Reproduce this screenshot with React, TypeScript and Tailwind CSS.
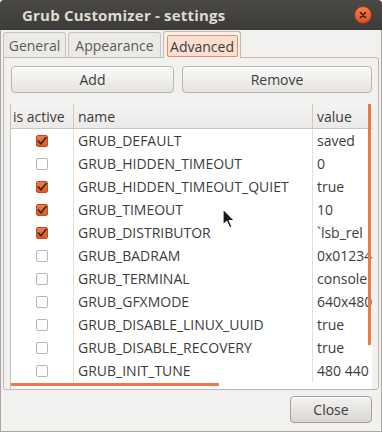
import React from "react";

const rows: { on: boolean; name: string; value: string }[] = [
  { on: true, name: "GRUB_DEFAULT", value: "saved" },
  { on: false, name: "GRUB_HIDDEN_TIMEOUT", value: "0" },
  { on: true, name: "GRUB_HIDDEN_TIMEOUT_QUIET", value: "true" },
  { on: true, name: "GRUB_TIMEOUT", value: "10" },
  { on: true, name: "GRUB_DISTRIBUTOR", value: "`lsb_rel" },
  { on: false, name: "GRUB_BADRAM", value: "0x01234" },
  { on: false, name: "GRUB_TERMINAL", value: "console" },
  { on: false, name: "GRUB_GFXMODE", value: "640x480" },
  { on: false, name: "GRUB_DISABLE_LINUX_UUID", value: "true" },
  { on: false, name: "GRUB_DISABLE_RECOVERY", value: "true" },
  { on: false, name: "GRUB_INIT_TUNE", value: "480 440" },
];

function Check({ on }: { on: boolean }) {
  if (on) {
    return (
      <div className="w-[12px] h-[12px] rounded-[2px] border border-[#c24a1c] bg-gradient-to-b from-[#f07a48] to-[#dd5a26] flex items-center justify-center">
        <svg width="10" height="10" viewBox="0 0 10 10">
          <path d="M1.5 5 L4 7.8 L8.8 1.8" fill="none" stroke="#3a2a24" strokeWidth="1.8" strokeLinecap="round" strokeLinejoin="round" />
        </svg>
      </div>
    );
  }
  return <div className="w-[12px] h-[12px] rounded-[2px] border border-[#b9b6b1] bg-white" />;
}

export default function App() {
  return (
    <div
      className="relative w-[382px] h-[432px] bg-[#f2f1f0] flex flex-col overflow-hidden text-[#3c3c3c]"
      style={{ fontFamily: '"Open Sans", "DejaVu Sans", sans-serif' }}
    >
      {/* title bar */}
      <div className="h-[30px] shrink-0 bg-gradient-to-b from-[#4a4945] to-[#3c3b37] flex items-center pl-[22px] pr-[10px] justify-between rounded-t-[4px]">
        <span className="text-[15px] font-bold text-[#dfdbd2] tracking-[0.2px]">Grub Customizer - settings</span>
        <div className="w-[18px] h-[18px] rounded-full bg-gradient-to-b from-[#f5804f] to-[#de4d15] border border-[#8a3a1a] flex items-center justify-center">
          <svg width="8" height="8" viewBox="0 0 8 8">
            <path d="M1.5 1.5 L6.5 6.5 M6.5 1.5 L1.5 6.5" stroke="#3a1a0c" strokeWidth="1.5" strokeLinecap="round" />
          </svg>
        </div>
      </div>

      <div className="flex-1 flex flex-col border-x border-b border-[#a8a6a2]">
        {/* tabs */}
        <div className="h-[27px] shrink-0 flex items-end pl-[2px] gap-[2px] relative z-10">
          <div className="w-[63px] h-[25px] border border-b-0 border-[#c7c4bf] rounded-t-[3px] bg-[#eceae7] flex items-center justify-center text-[14px] text-[#5a5a5a]">
            General
          </div>
          <div className="w-[93px] h-[25px] border border-b-0 border-[#c7c4bf] rounded-t-[3px] bg-[#eceae7] flex items-center justify-center text-[14px] text-[#5a5a5a]">
            Appearance
          </div>
          <div className="w-[78px] h-[27px] mb-[-1px] border border-b-0 border-[#bcb9b4] rounded-t-[3px] bg-[#f2f1f0] flex items-start justify-center pt-[3px]">
            <div className="w-[71px] h-[22px] border border-[#ec8a60] rounded-[2px] bg-[#fadfd2] flex items-center justify-center text-[14px] text-[#3c3c3c]">
              Advanced
            </div>
          </div>
        </div>

        {/* notebook panel */}
        <div className="mx-[2px] h-[333px] shrink-0 border border-[#bcb9b4] rounded-b-[3px] rounded-tr-[3px] flex flex-col px-[6px] pt-[8px]">
          <div className="flex gap-[8px] pl-[1px]">
            <button className="w-[163px] h-[27px] rounded-[4px] border border-[#b8b5b0] bg-gradient-to-b from-[#fafaf9] to-[#e6e4e1] text-[14px] text-[#3c3c3c] shadow-[inset_0_1px_0_#ffffff]">
              Add
            </button>
            <button className="w-[190px] h-[27px] rounded-[4px] border border-[#b8b5b0] bg-gradient-to-b from-[#fafaf9] to-[#e6e4e1] text-[14px] text-[#3c3c3c] shadow-[inset_0_1px_0_#ffffff]">
              Remove
            </button>
          </div>

          {/* tree view */}
          <div className="relative mt-[11px] flex-1 bg-white border-l border-[#c4c1bc] overflow-hidden">
            <div className="flex h-[25px] bg-gradient-to-b from-[#f4f3f2] to-[#eceae8] border-b border-[#c9c6c1] text-[14px]">
              <div className="w-[63px] shrink-0 border-r border-[#cfccc7] pl-[2px] flex items-center whitespace-nowrap">is active</div>
              <div className="w-[239px] shrink-0 border-r border-[#cfccc7] pl-[4px] flex items-center">name</div>
              <div className="flex-1 min-w-0 pl-[4px] flex items-center">value</div>
            </div>
            <div>
              {rows.map((r, i) => (
                <div key={i} className="flex h-[23px] text-[14px]">
                  <div className="w-[63px] shrink-0 border-r border-[#e2e0dc] flex items-center pl-[25px]">
                    <Check on={r.on} />
                  </div>
                  <div className="w-[239px] shrink-0 border-r border-[#e2e0dc] pl-[4px] flex items-center whitespace-nowrap">{r.name}</div>
                  <div className="flex-1 min-w-0 pl-[4px] flex items-center whitespace-nowrap overflow-hidden">{r.value}</div>
                </div>
              ))}
            </div>
            {/* overlay scrollbars */}
            <div className="absolute right-[1px] top-0 w-[3px] h-[241px] bg-[#f07844]" />
            <div className="absolute left-0 bottom-[3px] w-[208px] h-[3px] bg-[#f07844]" />
          </div>
        </div>

        {/* bottom */}
        <div className="flex-1 flex justify-end items-start pt-[6px] pr-[9px]">
          <button className="w-[82px] h-[27px] rounded-[4px] border border-[#a5a29d] bg-gradient-to-b from-[#f4f3f2] to-[#d9d7d3] text-[14px] text-[#3c3c3c] shadow-[inset_0_1px_0_#ffffff]">
            Close
          </button>
        </div>
      </div>

      {/* mouse cursor */}
      <svg className="absolute left-[222px] top-[208px]" width="14" height="22" viewBox="0 0 14 22">
        <path d="M1 1 L1 17 L4.8 13.4 L7.6 19.8 L10 18.8 L7.3 12.6 L12.5 12.6 Z" fill="#1a1a1a" stroke="#ffffff" strokeWidth="1.2" strokeLinejoin="round" />
      </svg>
    </div>
  );
}
